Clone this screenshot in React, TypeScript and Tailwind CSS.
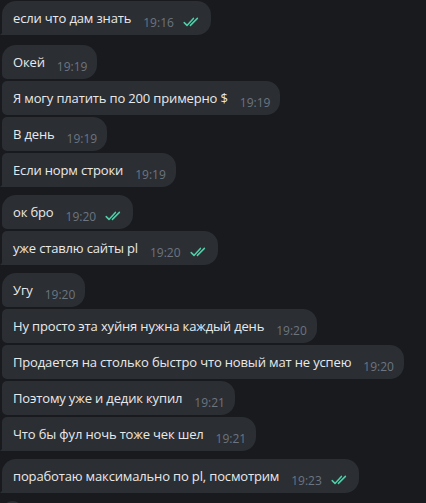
type Msg = { text: string; time: string; out?: boolean };

const GROUPS: { gap: number; msgs: Msg[] }[] = [
  { gap: 1, msgs: [{ text: 'если что дам знать', time: '19:16', out: true }] },
  {
    gap: 10,
    msgs: [
      { text: 'Окей', time: '19:19' },
      { text: 'Я могу платить по 200 примерно $', time: '19:19' },
      { text: 'В день', time: '19:19' },
      { text: 'Если норм строки', time: '19:19' },
    ],
  },
  {
    gap: 8,
    msgs: [
      { text: 'ок бро', time: '19:20', out: true },
      { text: 'уже ставлю сайты pl', time: '19:20', out: true },
    ],
  },
  {
    gap: 8,
    msgs: [
      { text: 'Угу', time: '19:20' },
      { text: 'Ну просто эта хуйня нужна каждый день', time: '19:20' },
      { text: 'Продается на столько быстро что новый мат не успею', time: '19:20' },
      { text: 'Поэтому уже и дедик купил', time: '19:21' },
      { text: 'Что бы фул ночь тоже чек шел', time: '19:21' },
    ],
  },
  {
    gap: 8,
    msgs: [
      { text: 'поработаю максимально по pl, посмотрим', time: '19:23', out: true },
    ],
  },
  { gap: 8, msgs: [{ text: '', time: '' }] },
];

function Checks() {
  return (
    <svg width="18" height="10" viewBox="0 0 18 10" fill="none" className="ml-[9px] mb-[8px] shrink-0">
      <path d="M1.2 5.6 L4 8.4 L10.4 1.4" stroke="#4fcfaa" strokeWidth="1.5" strokeLinecap="round" strokeLinejoin="round" />
      <path d="M7.4 8.4 L14.4 1.4" stroke="#4fcfaa" strokeWidth="1.5" strokeLinecap="round" />
    </svg>
  );
}

function Bubble({ m, first, last }: { m: Msg; first: boolean; last: boolean }) {
  const tl = first ? 'rounded-tl-[14px]' : 'rounded-tl-[5px]';
  const bl = last ? 'rounded-bl-none' : 'rounded-bl-[5px]';
  return (
    <div className="relative flex">
      <div className={`relative flex items-end h-[34px] pl-[11px] pr-[10px] bg-[#2b2e33] rounded-r-[14px] ${tl} ${bl}`}>
        <span className="self-start pt-[7px] text-[13px] tracking-[-0.15px] leading-[20px] text-[#e9e9ea] whitespace-nowrap">{m.text}</span>
        {m.time && (
          <span className="ml-[12px] mb-[5px] text-[12px] leading-[14px] text-[#6c7580] whitespace-nowrap">{m.time}</span>
        )}
        {m.out && <Checks />}
        {last && (
          <svg width="4" height="8" viewBox="0 0 4 8" className="absolute left-[-2px] bottom-0">
            <path d="M4 0 L4 8 L0 8 Q3 6 4 0 Z" fill="#2b2e33" />
          </svg>
        )}
      </div>
    </div>
  );
}

export default function App() {
  return (
    <div className="w-[426px] h-[503px] overflow-hidden bg-[#181a1e] pl-[2px]" style={{ fontFamily: '"Open Sans", sans-serif' }}>
      {GROUPS.map((g, gi) => (
        <div key={gi} className="flex flex-col items-start gap-[2px]" style={{ marginTop: g.gap }}>
          {g.msgs.map((m, i) => (
            <Bubble key={i} m={m} first={i === 0} last={i === g.msgs.length - 1} />
          ))}
        </div>
      ))}
    </div>
  );
}
